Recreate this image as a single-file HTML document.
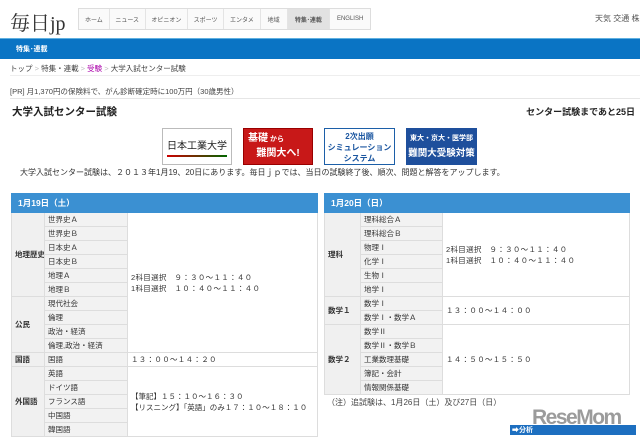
<!DOCTYPE html>
<html><head><meta charset="utf-8"><style>
*{margin:0;padding:0;box-sizing:border-box}
body{width:640px;height:445px;overflow:hidden;background:#fff;font-family:"Liberation Sans","Noto Sans CJK JP",sans-serif;color:#333;position:relative;font-size:8px}
.a{position:absolute;white-space:nowrap}
.nav{position:absolute;left:78px;top:8px;height:22px;width:293px;border:1px solid #ddd;background:#fafafa;display:flex}
.nav div{border-right:1px solid #e4e4e4;font-size:6px;color:#555;display:flex;align-items:center;justify-content:center}
table{position:absolute;border-collapse:collapse;font-size:7.5px;table-layout:fixed}
td{border:1px solid #ddd;height:14px;padding:0 3px;white-space:nowrap;overflow:hidden}
td.c1{background:#f0f0f0;font-weight:bold}
td.c2{background:#f2f2f2}
td.c3{background:#fff;letter-spacing:0.3px;line-height:11px}
th{background:#3b90d2;color:#fff;text-align:left;height:19px;padding-left:6px;font-size:8.5px;border:1px solid #3b90d2}
</style></head><body>
<div class="a" style="left:10px;top:7px;font-family:'Liberation Serif','Noto Serif CJK SC',serif;font-size:20px;color:#333">毎日jp</div>
<div class="nav">
<div style="width:31px">ホーム</div><div style="width:36px">ニュース</div><div style="width:43px">オピニオン</div><div style="width:36px">スポーツ</div><div style="width:37px">エンタメ</div><div style="width:27px">地域</div><div style="width:43px;background:#e2e2e2;font-weight:bold">特集･連載</div><div style="width:40px;border:none">ENGLISH</div>
</div>
<div class="a" style="left:595px;top:13px;font-size:8px;color:#555">天気 交通 株</div>
<div class="a" style="left:0;top:38px;width:640px;height:21px;background:#0a74c4;border-top:1px solid #5fb0e0"></div>
<div class="a" style="left:16px;top:44px;font-size:7px;color:#fff;font-weight:bold">特集･連載</div>
<div class="a" style="left:10px;top:63px;font-size:7.5px;color:#444">トップ <span style="color:#bbb">&gt;</span> 特集・連載 <span style="color:#bbb">&gt;</span> <span style="color:#a0a">受験</span> <span style="color:#bbb">&gt;</span> 大学入試センター試験</div>
<div class="a" style="left:10px;top:75px;width:630px;height:1px;background:#eee"></div>
<div class="a" style="left:10px;top:86px;font-size:7.5px;color:#444">[PR] 月1,370円の保険料で、がん診断確定時に100万円（30歳男性）</div>
<div class="a" style="left:10px;top:98px;width:630px;height:1px;background:#e6e6e6"></div>
<div class="a" style="left:12px;top:104px;font-size:10.5px;font-weight:bold;color:#222">大学入試センター試験</div>
<div class="a" style="right:5px;top:105px;font-size:9px;font-weight:bold;color:#222">センター試験まであと25日</div>
<div class="a" style="left:162px;top:128px;width:70px;height:37px;border:1px solid #bbb;background:#fff;font-size:10px;color:#222;text-align:center;padding-top:8px">日本工業大学<div style="height:2px;margin:3px 4px 0;background:linear-gradient(90deg,#c00,#060)"></div></div>
<div class="a" style="left:243px;top:128px;width:70px;height:37px;background:#c81818;border:1px solid #900;color:#fff;font-weight:bold;font-size:10px;padding:3px 4px;line-height:14px">基礎<span style="font-size:7px"> から</span><br>&nbsp;&nbsp;&nbsp;難関大へ!</div>
<div class="a" style="left:324px;top:128px;width:71px;height:37px;border:1px solid #1c5fa8;background:#fff;color:#1b56a0;font-weight:bold;font-size:8px;text-align:center;line-height:11px;padding-top:2px">2次出願<br>シミュレーション<br>システム</div>
<div class="a" style="left:406px;top:128px;width:71px;height:37px;background:#1e4f9c;color:#fff;font-weight:bold;font-size:7px;text-align:center;line-height:15px;padding-top:3px">東大・京大・医学部<br><span style="font-size:9.5px">難関大受験対策</span></div>
<div class="a" style="left:20px;top:167px;font-size:8px;color:#333">大学入試センター試験は、２０１３年1月19、20日にあります。毎日ｊｐでは、当日の試験終了後、順次、問題と解答をアップします。</div>

<table style="left:11px;top:193px;width:307px">
<colgroup><col style="width:33px"><col style="width:83px"><col></colgroup>
<tr><th colspan="3">1月19日（土）</th></tr>
<tr><td class="c1" rowspan="6">地理歴史</td><td class="c2">世界史Ａ</td><td class="c3" rowspan="10">2科目選択　９：３０～１１：４０<br>1科目選択　１０：４０～１１：４０</td></tr>
<tr><td class="c2">世界史Ｂ</td></tr><tr><td class="c2">日本史Ａ</td></tr><tr><td class="c2">日本史Ｂ</td></tr><tr><td class="c2">地理Ａ</td></tr><tr><td class="c2">地理Ｂ</td></tr>
<tr><td class="c1" rowspan="4">公民</td><td class="c2">現代社会</td></tr><tr><td class="c2">倫理</td></tr><tr><td class="c2">政治・経済</td></tr><tr><td class="c2">倫理,政治・経済</td></tr>
<tr><td class="c1">国語</td><td class="c2">国語</td><td class="c3">１３：００～１４：２０</td></tr>
<tr><td class="c1" rowspan="5">外国語</td><td class="c2">英語</td><td class="c3" rowspan="5" style="letter-spacing:0">【筆記】１５：１０～１６：３０<br>【リスニング】「英語」のみ１７：１０～１８：１０</td></tr>
<tr><td class="c2">ドイツ語</td></tr><tr><td class="c2">フランス語</td></tr><tr><td class="c2">中国語</td></tr><tr><td class="c2">韓国語</td></tr>
</table>

<table style="left:324px;top:193px;width:306px">
<colgroup><col style="width:36px"><col style="width:82px"><col></colgroup>
<tr><th colspan="3">1月20日（日）</th></tr>
<tr><td class="c1" rowspan="6">理科</td><td class="c2">理科総合Ａ</td><td class="c3" rowspan="6">2科目選択　９：３０～１１：４０<br>1科目選択　１０：４０～１１：４０</td></tr>
<tr><td class="c2">理科総合Ｂ</td></tr><tr><td class="c2">物理Ⅰ</td></tr><tr><td class="c2">化学Ⅰ</td></tr><tr><td class="c2">生物Ⅰ</td></tr><tr><td class="c2">地学Ⅰ</td></tr>
<tr><td class="c1" rowspan="2">数学１</td><td class="c2">数学Ⅰ</td><td class="c3" rowspan="2">１３：００～１４：００</td></tr>
<tr><td class="c2">数学Ⅰ・数学Ａ</td></tr>
<tr><td class="c1" rowspan="5">数学２</td><td class="c2">数学Ⅱ</td><td class="c3" rowspan="5">１４：５０～１５：５０</td></tr>
<tr><td class="c2">数学Ⅱ・数学Ｂ</td></tr><tr><td class="c2">工業数理基礎</td></tr><tr><td class="c2">簿記・会計</td></tr><tr><td class="c2">情報関係基礎</td></tr>
</table>
<div class="a" style="left:327px;top:397px;font-size:8px;color:#444">（注）追試験は、1月26日（土）及び27日（日）</div>
<div class="a" style="left:510px;top:425px;width:126px;height:10px;background:#1d6fc0"></div>
<div class="a" style="left:512px;top:425px;font-size:7px;color:#fff;font-weight:bold">➡分析</div>
<div class="a" style="left:532px;top:406px;font-size:21px;font-weight:bold;color:#8a8a8a;opacity:.85;letter-spacing:-1.5px">ReseMom</div>
</body></html>
